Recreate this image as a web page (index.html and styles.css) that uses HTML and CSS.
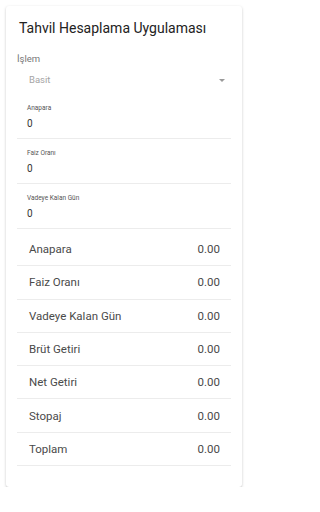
FILE: index.html
```html
<!DOCTYPE html>
<html lang="tr">
<head>
<meta charset="utf-8">
<title>Tahvil Hesaplama Uygulaması</title>
<link rel="stylesheet" href="styles.css">
</head>
<body>
<div class="card">
  <h1 class="title">Tahvil Hesaplama Uygulaması</h1>
  <div class="select-label">İşlem</div>
  <div class="select">
    <span class="select-value">Basit</span>
    <svg class="arrow" width="6" height="3" viewBox="0 0 6 3"><path d="M0 0h6L3 3z" fill="#9a9a9a"/></svg>
  </div>
  <div class="field">
    <div class="field-label">Anapara</div>
    <div class="field-value">0</div>
  </div>
  <div class="field">
    <div class="field-label">Faiz Oranı</div>
    <div class="field-value">0</div>
  </div>
  <div class="field">
    <div class="field-label">Vadeye Kalan Gün</div>
    <div class="field-value">0</div>
  </div>
  <ul class="results">
    <li class="row"><span>Anapara</span><span>0.00</span></li>
    <li class="row"><span>Faiz Oranı</span><span>0.00</span></li>
    <li class="row"><span>Vadeye Kalan Gün</span><span>0.00</span></li>
    <li class="row"><span>Brüt Getiri</span><span>0.00</span></li>
    <li class="row"><span>Net Getiri</span><span>0.00</span></li>
    <li class="row"><span>Stopaj</span><span>0.00</span></li>
    <li class="row"><span>Toplam</span><span>0.00</span></li>
  </ul>
</div>
</body>
</html>
```
FILE: styles.css
```css
* { box-sizing: border-box; }
html, body { margin: 0; padding: 0; background: #fff; }
body {
  font-family: Roboto, "Liberation Sans", Arial, sans-serif;
  padding: 6px 7px 0 6px;
}
.card {
  width: 236px;
  background: #fff;
  border-radius: 3px;
  box-shadow: 0 1px 3px rgba(0,0,0,0.2), 0 1px 1px rgba(0,0,0,0.07);
  padding: 12px 11px 21px 11px;
}
.title {
  margin: 0 0 0 2px;
  font-size: 14px;
  line-height: 20px;
  font-weight: 400;
  color: #222;
}
.select-label {
  margin-top: 15px;
  font-size: 9.5px;
  line-height: 12px;
  color: #777;
}
.select {
  margin-top: 7px;
  height: 16px;
  display: flex;
  align-items: center;
  justify-content: space-between;
  padding: 0 6px 0 12px;
}
.select-value {
  font-size: 9.5px;
  line-height: 16px;
  color: #a5a5a5;
}
.arrow { display: block; }
.field {
  height: 45px;
  padding: 9px 10px 0 10px;
  border-bottom: 1px solid #ececec;
}
.select + .field { margin-top: 6px; }
.field-label {
  font-size: 6.5px;
  line-height: 10px;
  color: #555;
}
.field-value {
  margin-top: 3px;
  font-size: 10px;
  line-height: 16px;
  color: #333;
}
.results {
  list-style: none;
  margin: 4px 0 0 0;
  padding: 0;
}
.row {
  height: 33.3px;
  display: flex;
  align-items: center;
  justify-content: space-between;
  padding: 0 11px 0 12px;
  border-bottom: 1px solid #ececec;
  font-size: 11.5px;
  color: #4a4a4a;
}
```
